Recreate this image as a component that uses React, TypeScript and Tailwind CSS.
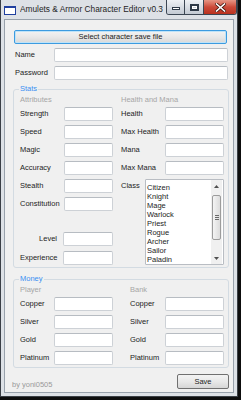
import React from "react";

function TB({ className }: { className: string }) {
  return (
    <div
      className={
        "h-[14px] bg-white border border-[#cdd1d6] border-t-[#b7bcc2] rounded-[2px] shrink-0 " +
        className
      }
    />
  );
}

function Row({
  label,
  labelClass,
  boxClass,
}: {
  label: string;
  labelClass: string;
  boxClass: string;
}) {
  return (
    <div className="flex items-center h-[14px]">
      <div className={"leading-[10px] whitespace-nowrap " + labelClass}>{label}</div>
      <TB className={boxClass} />
    </div>
  );
}

function Legend({ text }: { text: string }) {
  return (
    <legend className="ml-[5px] px-[1px] leading-[10px] text-[#3a8ff2]">{text}</legend>
  );
}

const classes = [
  "Citizen",
  "Knight",
  "Mage",
  "Warlock",
  "Priest",
  "Rogue",
  "Archer",
  "Sailor",
  "Paladin",
];

function ListBox() {
  return (
    <div className="w-[79px] h-[86px] bg-white border border-[#b9bdc3] rounded-[1px] flex shrink-0">
      <div className="flex-1 pt-[3px] pl-[1px] flex flex-col">
        {classes.map((c) => (
          <div key={c} className="h-[9px] leading-[9px] whitespace-nowrap">
            {c}
          </div>
        ))}
      </div>
      <div className="w-[11px] mr-[1px] bg-[#f0f0f0] flex flex-col items-center">
        <div className="h-[12px] flex items-center justify-center">
          <svg width="5" height="3" viewBox="0 0 5 3">
            <path d="M0 3 L2.5 0 L5 3 Z" fill="#505050" />
          </svg>
        </div>
        <div className="mt-[3px] w-[9px] h-[45px] rounded-[2px] border border-[#9c9c9c] bg-gradient-to-r from-[#f4f4f4] to-[#dcdcdc] flex flex-col items-center justify-center gap-[1px]">
          <div className="w-[4px] h-[1px] bg-[#6a6a6a]" />
          <div className="w-[4px] h-[1px] bg-[#6a6a6a]" />
          <div className="w-[4px] h-[1px] bg-[#6a6a6a]" />
        </div>
        <div className="flex-1" />
        <div className="h-[12px] flex items-center justify-center">
          <svg width="5" height="3" viewBox="0 0 5 3">
            <path d="M0 0 L2.5 3 L5 0 Z" fill="#505050" />
          </svg>
        </div>
      </div>
    </div>
  );
}

export default function App() {
  return (
    <div className="w-[241px] h-[400px] bg-[#0d0d0d] overflow-hidden font-['Liberation_Sans',Arial,sans-serif] text-[7.5px] text-[#1c1c1c]">
      <div className="w-[238px] h-[397px] bg-[#dde1e6] border-x border-b border-[#3a3f45] flex flex-col">
        {/* Title bar */}
        <div className="h-[19px] flex items-start shrink-0">
          <div className="mt-[6px] ml-[3px] w-[12px] h-[9px] bg-white border border-[#1f3f9f] border-t-2 shrink-0" />
          <div className="ml-[4px] mt-[4px] text-[8.3px] leading-[10px] text-[#1e1e1e] flex-1 whitespace-nowrap overflow-hidden">
            Amulets &amp; Armor Character Editor v0.3
          </div>
          <div className="flex h-[15px] shrink-0 border border-t-0 border-[#3b4653] rounded-b-[3px] overflow-hidden">
            <div className="w-[18px] h-full bg-gradient-to-b from-[#eef1f5] to-[#c3cad3] border-r border-[#3b4653] flex items-center justify-center">
              <div className="mt-[3px] w-[8px] h-[3px] bg-white border border-[#2e3a48]" />
            </div>
            <div className="w-[19px] h-full bg-gradient-to-b from-[#eef1f5] to-[#c3cad3] border-r border-[#3b4653] flex items-center justify-center">
              <div className="w-[9px] h-[7px] border border-[#2e3a48] bg-[#2e3a48] p-[1px]">
                <div className="w-full h-full border-t-[1px] border-x border-b border-white bg-[#c7ced7]" />
              </div>
            </div>
            <div className="w-[32px] h-full bg-gradient-to-b from-[#e59585] via-[#cc4a3a] to-[#b9321f] flex items-center justify-center">
              <svg width="11" height="9" viewBox="0 0 11 9">
                <path d="M1.5 1 L9.5 8 M9.5 1 L1.5 8" stroke="#4a1a12" strokeWidth="3.2" strokeLinecap="square" />
                <path d="M1.5 1 L9.5 8 M9.5 1 L1.5 8" stroke="#ffffff" strokeWidth="1.6" strokeLinecap="square" />
              </svg>
            </div>
          </div>
        </div>

        {/* Client */}
        <div className="mx-[3px] h-[374px] bg-[#f0f0f0] border border-[#98a1ab] flex flex-col">
          <button className="mt-[10px] ml-[9px] w-[213px] h-[14px] rounded-[2px] border border-[#3c9be0] bg-gradient-to-b from-[#f3f3f3] via-[#e8e8e8] to-[#d8d8d8] shadow-[inset_0_0_0_1px_#bfe3f8] leading-[10px] text-[#1c1c1c] flex items-center justify-center">
            Select character save file
          </button>

          <div className="mt-[4px] ml-[10px]">
            <Row label="Name" labelClass="w-[39px]" boxClass="w-[174px]" />
          </div>
          <div className="mt-[4px] ml-[10px]">
            <Row label="Password" labelClass="w-[39px]" boxClass="w-[174px]" />
          </div>

          {/* Stats */}
          <fieldset className="mt-[4px] ml-[8px] w-[216px] border border-[#d3dbe2] rounded-[3px] p-0 m-0 min-w-0">
            <Legend text="Stats" />
            <div className="pt-[1px] pl-[6px] pr-[4px] pb-[2px] flex gap-[8px]">
              {/* Attributes */}
              <div className="w-[93px] flex flex-col">
                <div className="h-[10px] leading-[10px] text-[#a6a6a6]">Attributes</div>
                <div className="mt-[2px] flex flex-col gap-[4px]">
                  <Row label="Strength" labelClass="w-[44px]" boxClass="w-[49px]" />
                  <Row label="Speed" labelClass="w-[44px]" boxClass="w-[49px]" />
                  <Row label="Magic" labelClass="w-[44px]" boxClass="w-[49px]" />
                  <Row label="Accuracy" labelClass="w-[44px]" boxClass="w-[49px]" />
                  <Row label="Stealth" labelClass="w-[44px]" boxClass="w-[49px]" />
                  <Row label="Constitution" labelClass="w-[44px]" boxClass="w-[49px]" />
                </div>
                <div className="mt-[21px]">
                  <Row label="Level" labelClass="w-[43px] text-right pr-[6px]" boxClass="w-[50px]" />
                </div>
                <div className="mt-[5px]">
                  <Row label="Experience" labelClass="w-[43px]" boxClass="w-[50px]" />
                </div>
              </div>
              {/* Health and Mana */}
              <div className="w-[103px] flex flex-col">
                <div className="h-[10px] leading-[10px] text-[#a6a6a6] whitespace-nowrap">Health and Mana</div>
                <div className="mt-[2px] flex flex-col gap-[4px]">
                  <Row label="Health" labelClass="w-[44px]" boxClass="w-[59px]" />
                  <Row label="Max Health" labelClass="w-[44px]" boxClass="w-[59px]" />
                  <Row label="Mana" labelClass="w-[44px]" boxClass="w-[59px]" />
                  <Row label="Max Mana" labelClass="w-[44px]" boxClass="w-[59px]" />
                  <div className="flex items-start">
                    <div className="w-[24px] mt-[2px] leading-[10px]">Class</div>
                    <ListBox />
                  </div>
                </div>
              </div>
            </div>
          </fieldset>

          {/* Money */}
          <fieldset className="mt-[6px] ml-[8px] w-[216px] border border-[#d3dbe2] rounded-[3px] p-0 m-0 min-w-0">
            <Legend text="Money" />
            <div className="pt-[1px] pl-[6px] pr-[4px] pb-[2px] flex gap-[17px]">
              <div className="w-[93px] flex flex-col">
                <div className="h-[10px] leading-[10px] text-[#a6a6a6]">Player</div>
                <div className="mt-[2px] flex flex-col gap-[4px]">
                  <Row label="Copper" labelClass="w-[34px]" boxClass="w-[59px]" />
                  <Row label="Silver" labelClass="w-[34px]" boxClass="w-[59px]" />
                  <Row label="Gold" labelClass="w-[34px]" boxClass="w-[59px]" />
                  <Row label="Platinum" labelClass="w-[34px]" boxClass="w-[59px]" />
                </div>
              </div>
              <div className="w-[94px] flex flex-col">
                <div className="h-[10px] leading-[10px] text-[#a6a6a6]">Bank</div>
                <div className="mt-[2px] flex flex-col gap-[4px]">
                  <Row label="Copper" labelClass="w-[35px]" boxClass="w-[59px]" />
                  <Row label="Silver" labelClass="w-[35px]" boxClass="w-[59px]" />
                  <Row label="Gold" labelClass="w-[35px]" boxClass="w-[59px]" />
                  <Row label="Platinum" labelClass="w-[35px]" boxClass="w-[59px]" />
                </div>
              </div>
            </div>
          </fieldset>

          {/* Footer */}
          <div className="mt-[6px] flex items-start">
            <div className="ml-[7px] mt-[6px] leading-[10px] text-[#9a9a9a]">by yoni0505</div>
            <button className="ml-auto mr-[4px] w-[52px] h-[15px] rounded-[2px] border border-[#707070] bg-gradient-to-b from-[#f3f3f3] via-[#e8e8e8] to-[#d6d6d6] leading-[10px] text-[#1c1c1c] flex items-center justify-center">
              Save
            </button>
          </div>
        </div>
      </div>
    </div>
  );
}
